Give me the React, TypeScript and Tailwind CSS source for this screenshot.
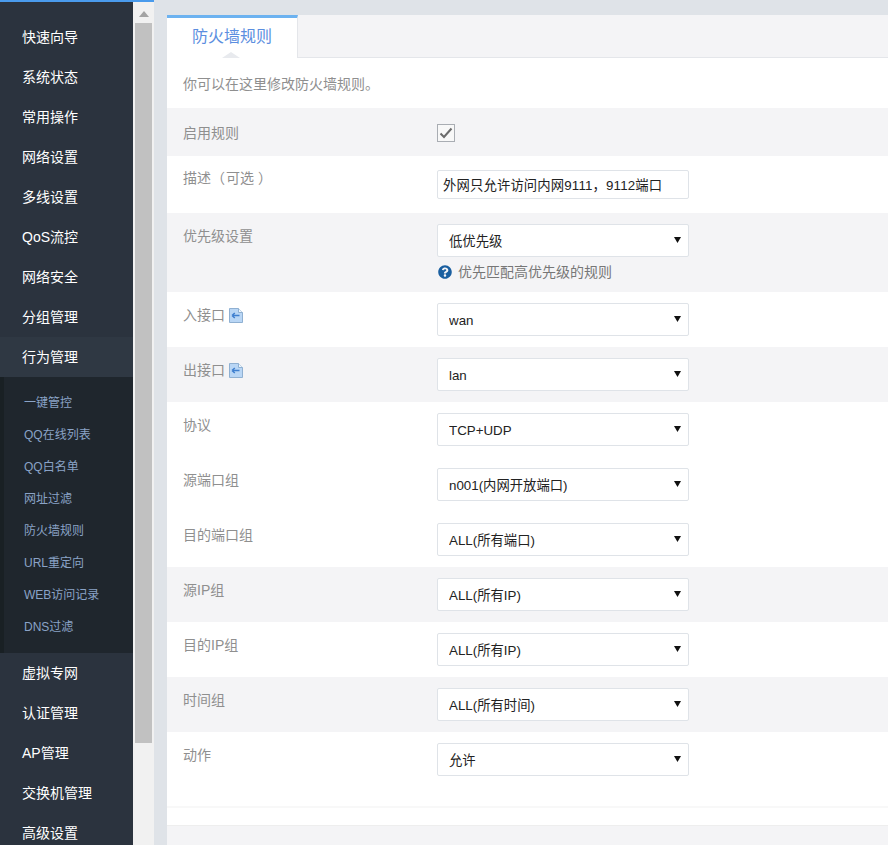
import React from 'react';
import { FaQuestionCircle } from 'react-icons/fa';

const topMenu = ['快速向导', '系统状态', '常用操作', '网络设置', '多线设置', 'QoS流控', '网络安全', '分组管理', '行为管理'];
const subMenu = ['一键管控', 'QQ在线列表', 'QQ白名单', '网址过滤', '防火墙规则', 'URL重定向', 'WEB访问记录', 'DNS过滤'];
const bottomMenu = ['虚拟专网', '认证管理', 'AP管理', '交换机管理', '高级设置'];

const MenuItem: React.FC<{ label: string; active?: boolean }> = ({ label, active }) => (
  <div className={`h-10 shrink-0 flex items-center pl-[22px] text-sm text-white ${active ? 'bg-[#2f3843]' : ''}`}>
    {label}
  </div>
);

const FileArrow: React.FC = () => (
  <svg width="14" height="15" viewBox="0 0 14 15" className="shrink-0">
    <path d="M0.5 0.5H9.5L13.5 4.5V14.5H0.5Z" fill="#b9d6f5" stroke="#8fb0d2" />
    <path d="M9.5 0.5V4.5H13.5" fill="#eef5fc" stroke="#8fb0d2" />
    <path d="M3 7.5H10.5M3 7.5L5.8 5M3 7.5L5.8 10" fill="none" stroke="#3f7fcf" strokeWidth="1.5" />
  </svg>
);

const Select: React.FC<{ value: string }> = ({ value }) => (
  <div className="relative w-[252px] h-[33px]">
    <select
      defaultValue={value}
      className="w-full h-full appearance-none bg-white border border-[#dfe3e8] rounded-[2px] pl-[11px] pt-[2px] text-[13.33px] text-[#222] outline-none"
    >
      <option>{value}</option>
    </select>
    <svg width="7" height="8" viewBox="0 0 7 8" className="absolute right-[8px] top-[12px] pointer-events-none">
      <path d="M0 1H7L3.5 7Z" fill="#111" />
    </svg>
  </div>
);

const Row: React.FC<{
  label: React.ReactNode;
  gray?: boolean;
  icon?: boolean;
  labelTop?: string;
  height: string;
  children: React.ReactNode;
  contentTop: string;
}> = ({ label, gray, icon, labelTop, height, children, contentTop }) => (
  <div className={`flex pl-4 ${height} ${gray ? 'bg-[#f4f4f6]' : 'bg-white'}`}>
    <div className={`w-[254px] shrink-0 ${labelTop ?? 'pt-[13px]'}`}>
      <div className="flex items-center gap-1 h-5 text-sm text-[#8f8f8f]">
        <span>{label}</span>
        {icon && <FileArrow />}
      </div>
    </div>
    <div className={contentTop}>{children}</div>
  </div>
);

const selectRows = [
  { label: '入接口', value: 'wan', icon: true },
  { label: '出接口', value: 'lan', icon: true, gray: true },
  { label: '协议', value: 'TCP+UDP' },
  { label: '源端口组', value: 'n001(内网开放端口)' },
  { label: '目的端口组', value: 'ALL(所有端口)' },
  { label: '源IP组', value: 'ALL(所有IP)', gray: true },
  { label: '目的IP组', value: 'ALL(所有IP)' },
  { label: '时间组', value: 'ALL(所有时间)', gray: true },
  { label: '动作', value: '允许' },
];

const App: React.FC = () => {
  return (
    <div
      className="flex h-[845px] overflow-hidden bg-[#dfe3e8]"
      style={{ fontFamily: '"Liberation Sans", "Noto Sans CJK SC", sans-serif' }}
    >
      <div className="w-[154px] shrink-0 flex flex-col">
        <div className="h-0.5 shrink-0 bg-[#4a9bec]" />
        <div className="flex flex-1 min-h-0">
          <div className="w-[133px] shrink-0 bg-[#2b333e] pt-[15px] flex flex-col overflow-hidden">
            {topMenu.map((m) => (
              <MenuItem key={m} label={m} active={m === '行为管理'} />
            ))}
            <div className="shrink-0 h-[276px] bg-[#1f262d] border-l-4 border-[#192024] pt-[10px]">
              {subMenu.map((m) => (
                <div key={m} className="h-8 flex items-center pl-5 text-xs text-[#8aa3c7]">
                  {m}
                </div>
              ))}
            </div>
            {bottomMenu.map((m) => (
              <MenuItem key={m} label={m} />
            ))}
          </div>
          <div className="w-[21px] shrink-0 bg-[#f1f1f1] pl-0.5 pr-0.5">
            <div className="h-[21px] flex justify-center pt-[9px]">
              <svg width="10" height="6" viewBox="0 0 10 6">
                <path d="M5 0L10 6H0Z" fill="#a3a3a3" />
              </svg>
            </div>
            <div className="h-[720px] bg-[#c1c1c1]" />
          </div>
        </div>
      </div>

      <div className="flex-1 min-w-0 pl-[13px] pt-[15px]">
        <div className="h-[830px] bg-white flex flex-col">
          <div className="h-[43px] shrink-0 flex bg-[#f4f4f6] border-b border-[#e4e6ea]">
            <div className="relative w-[131px] h-[43px] bg-white border-t-[3px] border-t-[#6cb2f0] border-r border-r-[#e4e6ea] flex items-center justify-center text-base text-[#5b8ee0] pb-[3px]">
              防火墙规则
              <svg width="18" height="6" viewBox="0 0 18 6" className="absolute left-[55px] bottom-0">
                <path d="M0 6L9 0L18 6Z" fill="#e8eaee" />
              </svg>
            </div>
          </div>

          <div className="h-[50px] shrink-0 pl-4 pt-[16px] text-sm leading-5 text-[#8f8f8f]">你可以在这里修改防火墙规则。</div>

          <Row label="启用规则" gray height="h-12" labelTop="pt-[15px]" contentTop="pt-4">
            <div className="w-[18px] h-[18px] border border-[#a9adb3] bg-[#f8f8f8] flex items-center justify-center">
              <svg width="14" height="12" viewBox="0 0 14 12">
                <path d="M1.5 6.5L5 10L12.5 1.5" fill="none" stroke="#6b6b6b" strokeWidth="2" />
              </svg>
            </div>
          </Row>

          <Row
            label={
              <>
                描述<span className="mr-px">（</span>可选<span className="ml-1">）</span>
              </>
            }
            height="h-[57px]"
            labelTop="pt-3"
            contentTop="pt-[14px]"
          >
            <input
              readOnly
              value="外网只允许访问内网9111，9112端口"
              className="w-[252px] h-[29px] bg-white border border-[#dfe3e8] rounded-[2px] pl-[5px] text-[13.33px] tracking-[0.15px] text-[#222] outline-none"
            />
          </Row>

          <Row label="优先级设置" gray height="h-[79px]" contentTop="pt-[11px]">
            <Select value="低优先级" />
            <div className="flex items-center gap-[6px] mt-[5px] pl-px h-5 text-sm text-[#777]">
              <FaQuestionCircle className="w-[14px] h-[14px] text-[#1a5fa0]" />
              <span>优先匹配高优先级的规则</span>
            </div>
          </Row>

          {selectRows.map((r) => (
            <Row key={r.label} label={r.label} gray={r.gray} icon={r.icon} height="h-[55px]" contentTop="pt-[11px]">
              <Select value={r.value} />
            </Row>
          ))}

          <div className="h-[19px] shrink-0 bg-white" />
          <div className="h-[2px] shrink-0 bg-[#f8f8f8]" />
          <div className="h-[17px] shrink-0 bg-white" />
          <div className="flex-1 bg-[#f4f4f6] border-t border-[#eeeeee]" />
        </div>
      </div>
    </div>
  );
};

export default App;
